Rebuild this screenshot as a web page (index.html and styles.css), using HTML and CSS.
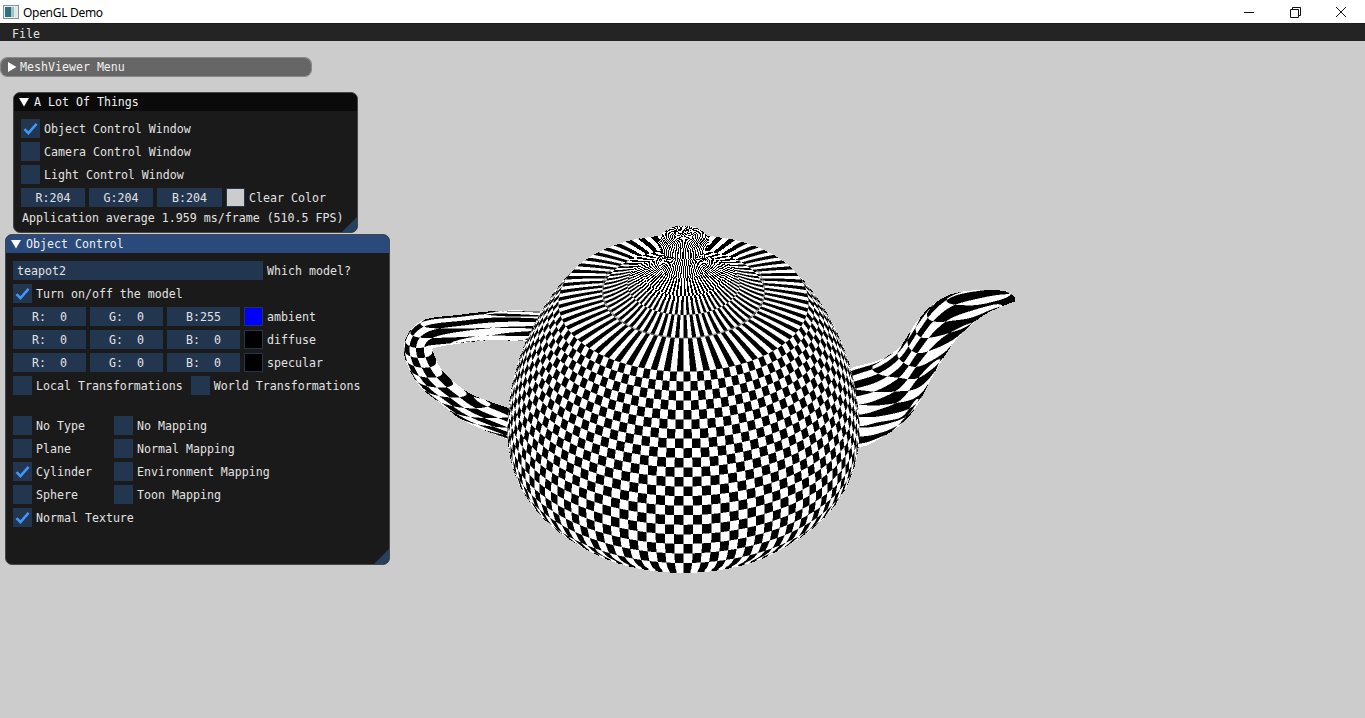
FILE: index.html
```html
<!DOCTYPE html>
<html lang="en">
<head>
<meta charset="utf-8">
<title>OpenGL Demo</title>
<link rel="stylesheet" href="styles.css">
</head>
<body>
<svg class="defs" width="0" height="0" aria-hidden="true">
  <symbol id="check" viewBox="0 0 19 19"><path d="M3.5 10.2 7.4 14.2 15.6 4.8" fill="none" stroke="#4296fa" stroke-width="2.6"/></symbol>
  <symbol id="down" viewBox="0 0 10 10"><path d="M0 1H10L5 9.5Z" fill="#fff"/></symbol>
  <symbol id="right" viewBox="0 0 10 10"><path d="M1 0V10L9.5 5Z" fill="#fff"/></symbol>
</svg>
<header class="titlebar">
  <svg class="appicon" width="16" height="14" viewBox="0 0 16 14">
    <rect x="0.5" y="0.5" width="15" height="13" fill="#e8eef0" stroke="#8a9296"/>
    <rect x="2" y="2" width="6" height="10" fill="#2f6f7f"/>
    <rect x="8" y="2" width="3" height="10" fill="#9fc4c8"/>
    <rect x="11" y="2" width="3" height="10" fill="#dfe8e4"/>
  </svg>
  <span class="apptitle">OpenGL Demo</span>
  <div class="winbtns">
    <svg class="winbtn" width="46" height="20" viewBox="0 0 46 20"><path d="M18 10.5H28" stroke="#111" fill="none"/></svg>
    <svg class="winbtn" width="46" height="20" viewBox="0 0 46 20"><path d="M18.5 7.5H26.5V15.5H18.5ZM20.5 7.5V5.5H28.5V13.5H26.5" stroke="#111" fill="none"/></svg>
    <svg class="winbtn" width="46" height="20" viewBox="0 0 46 20"><path d="M18 5 28 15M28 5 18 15" stroke="#111" fill="none"/></svg>
  </div>
</header>
<nav class="menubar"><span>File</span></nav>
<main class="viewport">
  <canvas id="teapot" class="teapot" width="620" height="360"></canvas>

  <section class="win win-menu">
    <div class="wintitle collapsed"><svg class="arrow" width="10" height="10"><use href="#right"/></svg><span>MeshViewer Menu</span></div>
  </section>

  <section class="win win-things">
    <div class="wintitle inactive"><svg class="arrow" width="10" height="10"><use href="#down"/></svg><span>A Lot Of Things</span></div>
    <div class="winbody">
      <label class="row"><i class="cb"><svg width="19" height="19"><use href="#check"/></svg></i><span>Object Control Window</span></label>
      <label class="row"><i class="cb"></i><span>Camera Control Window</span></label>
      <label class="row"><i class="cb"></i><span>Light Control Window</span></label>
      <div class="row colors short">
        <b class="field">R:204</b><b class="field">G:204</b><b class="field wide">B:204</b>
        <i class="swatch clear"></i><span class="swlabel">Clear Color</span>
      </div>
      <p class="stat">Application average 1.959 ms/frame (510.5 FPS)</p>
    </div>
    <i class="grip"></i>
  </section>

  <section class="win win-object">
    <div class="wintitle active"><svg class="arrow" width="10" height="10"><use href="#down"/></svg><span>Object Control</span></div>
    <div class="winbody">
      <div class="row"><b class="field input">teapot2</b><span class="swlabel">Which model?</span></div>
      <label class="row"><i class="cb"><svg width="19" height="19"><use href="#check"/></svg></i><span>Turn on/off the model</span></label>
      <div class="row colors">
        <b class="field">R:  0</b><b class="field">G:  0</b><b class="field">B:255</b>
        <i class="swatch blue"></i><span class="swlabel">ambient</span>
      </div>
      <div class="row colors">
        <b class="field">R:  0</b><b class="field">G:  0</b><b class="field">B:  0</b>
        <i class="swatch black"></i><span class="swlabel">diffuse</span>
      </div>
      <div class="row colors">
        <b class="field">R:  0</b><b class="field">G:  0</b><b class="field">B:  0</b>
        <i class="swatch black"></i><span class="swlabel">specular</span>
      </div>
      <div class="row transforms">
        <label class="row"><i class="cb"></i><span>Local Transformations</span></label>
        <label class="row"><i class="cb"></i><span>World Transformations</span></label>
      </div>
      <div class="options">
        <label class="row"><i class="cb"></i><span>No Type</span></label>
        <label class="row"><i class="cb"></i><span>No Mapping</span></label>
        <label class="row"><i class="cb"></i><span>Plane</span></label>
        <label class="row"><i class="cb"></i><span>Normal Mapping</span></label>
        <label class="row"><i class="cb"><svg width="19" height="19"><use href="#check"/></svg></i><span>Cylinder</span></label>
        <label class="row"><i class="cb"></i><span>Environment Mapping</span></label>
        <label class="row"><i class="cb"></i><span>Sphere</span></label>
        <label class="row"><i class="cb"></i><span>Toon Mapping</span></label>
        <label class="row"><i class="cb"><svg width="19" height="19"><use href="#check"/></svg></i><span>Normal Texture</span></label>
      </div>
    </div>
    <i class="grip"></i>
  </section>
</main>
<script src="teapot.js"></script>
</body>
</html>
```
FILE: styles.css
```css
* { box-sizing: border-box; }
html, body { margin: 0; height: 100%; overflow: hidden; }
body {
  display: flex;
  flex-direction: column;
  background: #cccccc;
  color: #e2e2e2;
  font: 11.62px/13px "DejaVu Sans Mono", monospace;
}
.defs { position: absolute; }

.titlebar {
  height: 23px;
  flex: none;
  display: flex;
  align-items: center;
  background: #fff;
  color: #000;
  padding-left: 3px;
  font: 12px "Noto Sans", sans-serif;
  letter-spacing: -0.3px;
}
.appicon { margin-right: 4px; }
.apptitle { padding-top: 1px; }
.winbtns { margin-left: auto; display: flex; margin-right: 1px; }
.winbtn { display: block; }

.menubar {
  height: 18px;
  flex: none;
  background: #242424;
  border-top: 1px solid #1c1c1c;
  padding: 4px 0 0 12px;
}

.viewport { position: relative; flex: 1; }
.teapot { position: absolute; left: 400px; top: 179px; }

.win {
  position: absolute;
  background: #1a1a1a;
  border: 1px solid #45454c;
  border-radius: 7px;
  overflow: hidden;
}
.win-menu { left: 0; top: 16px; width: 312px; height: 20px; background: #666; border-color: #8a8a8a; }
.win-things { left: 13px; top: 51px; width: 345px; height: 141px; }
.win-object { left: 5px; top: 193px; width: 385px; height: 331px; }

.wintitle {
  height: 18px;
  display: flex;
  align-items: center;
  color: #f0f0f0;
  padding-left: 5px;
  gap: 5px;
}
.wintitle > span { padding-top: 1px; }
.arrow { flex: none; }
.wintitle.collapsed { background: #666; padding-left: 6px; gap: 3px; }
.wintitle.inactive { background: #0a0a0a; }
.wintitle.active { background: #294a7a; }

.winbody { display: flex; flex-direction: column; gap: 4px; padding: 8px 7px; }

.row { display: flex; align-items: center; height: 19px; }
.row > span { margin-left: 4px; padding-top: 2px; white-space: pre; }

.cb {
  width: 19px;
  height: 19px;
  flex: none;
  display: block;
  background: #233650;
}
.cb svg { display: block; }

.colors { gap: 4px; }
.field {
  width: 73px;
  height: 19px;
  flex: none;
  background: #233650;
  font-weight: normal;
  text-align: center;
  line-height: 20px;
  white-space: pre;
}
.short .field { width: 64px; }
.short .field.wide { width: 65px; }
.field.input { width: 250px; text-align: left; padding-left: 4px; }
.swatch { width: 19px; height: 19px; flex: none; border: 1px solid #233650; display: block; }
.clear { background: #cccccc; }
.blue { background: #0000ff; }
.black { background: #000; }
.colors > .swlabel { margin-left: 0; }

.transforms > .row + .row { margin-left: 8px; }
.transforms { margin-bottom: 17px; }

.options { display: grid; grid-template-columns: 101px auto; row-gap: 4px; justify-content: start; }
.options .row:last-child { grid-column: 1 / span 2; }

.stat { margin: 0; height: 13px; padding: 1px 0 0 1px; white-space: pre; }

.grip {
  position: absolute;
  right: 0;
  bottom: 0;
  width: 15px;
  height: 15px;
  background: #26405f;
  clip-path: polygon(100% 0, 100% 100%, 0 100%);
}
```
FILE: teapot.js
```js
(function () {
  var W = 620, H = 360, X0 = 400, Y0 = 220, SS = 2;
  var CX = 683.5, BASE = 500, NC = 118, ROW = 9.5, SE = 0.55, CE = 0.835;
  var RIM_H = 197, RIM_V = 21;
  var w = W * SS, h = H * SS;
  var col = new Uint8Array(w * h);
  var zb = new Float32Array(w * h).fill(-1e9);

  function tri(a, b, c) {
    var minx = Math.max(0, Math.floor(Math.min(a.x, b.x, c.x)));
    var maxx = Math.min(w - 1, Math.ceil(Math.max(a.x, b.x, c.x)));
    var miny = Math.max(0, Math.floor(Math.min(a.y, b.y, c.y)));
    var maxy = Math.min(h - 1, Math.ceil(Math.max(a.y, b.y, c.y)));
    var d = (b.x - a.x) * (c.y - a.y) - (b.y - a.y) * (c.x - a.x);
    if (Math.abs(d) < 1e-6) return;
    for (var y = miny; y <= maxy; y++) {
      for (var x = minx; x <= maxx; x++) {
        var px = x + 0.5, py = y + 0.5;
        var l1 = ((b.x - px) * (c.y - py) - (b.y - py) * (c.x - px)) / d;
        var l2 = ((c.x - px) * (a.y - py) - (c.y - py) * (a.x - px)) / d;
        var l3 = 1 - l1 - l2;
        if (l1 < 0 || l2 < 0 || l3 < 0) continue;
        var z = l1 * a.z + l2 * b.z + l3 * c.z;
        var i = y * w + x;
        if (z <= zb[i]) continue;
        zb[i] = z;
        var u = l1 * a.u + l2 * b.u + l3 * c.u;
        var v = l1 * a.v + l2 * b.v + l3 * c.v;
        col[i] = ((Math.floor(u) + Math.floor(v)) & 1) ? 2 : 1;
      }
    }
  }

  function world(X, Hh, Z, phi, v) {
    return {
      x: (CX + X - X0) * SS,
      y: (BASE - Hh + Z * SE - Y0) * SS,
      z: Z * CE + Hh * SE,
      u: phi * NC / (2 * Math.PI),
      v: v
    };
  }

  function catmull(pts, steps) {
    var out = [];
    for (var i = 0; i < pts.length - 1; i++) {
      var p0 = pts[Math.max(0, i - 1)], p1 = pts[i], p2 = pts[i + 1], p3 = pts[Math.min(pts.length - 1, i + 2)];
      for (var s = 0; s < steps; s++) {
        var t = s / steps, t2 = t * t, t3 = t2 * t;
        out.push([
          0.5 * (2 * p1[0] + (p2[0] - p0[0]) * t + (2 * p0[0] - 5 * p1[0] + 4 * p2[0] - p3[0]) * t2 + (3 * p1[0] - p0[0] - 3 * p2[0] + p3[0]) * t3),
          0.5 * (2 * p1[1] + (p2[1] - p0[1]) * t + (2 * p0[1] - 5 * p1[1] + 4 * p2[1] - p3[1]) * t2 + (3 * p1[1] - p0[1] - 3 * p2[1] + p3[1]) * t3)
        ]);
      }
    }
    out.push(pts[pts.length - 1]);
    return out;
  }

  // a tube given by its two screen edges; a0 = spread of the depth across the tube
  function tube(outer, inner, a0, b0, rowH) {
    var a = catmull(outer, 14), b = catmull(inner, 14), N = 24, grid = [];
    for (var i = 0; i < a.length; i++) {
      var r = [];
      var hw = Math.hypot(a[i][0] - b[i][0], a[i][1] - b[i][1]) / 2;
      for (var j = 0; j <= N; j++) {
        var t = j / N;
        var sx = a[i][0] + (b[i][0] - a[i][0]) * t, sy = a[i][1] + (b[i][1] - a[i][1]) * t;
        var bulge = hw * Math.sqrt(Math.max(0, 4 * t * (1 - t)));
        var X = sx - CX, Hh = BASE - sy + bulge * SE;
        var uZ = hw * (2 * t - 1) * a0 + bulge * b0;
        r.push({ x: (sx - X0) * SS, y: (sy - Y0) * SS, z: -1e6, u: Math.atan2(X, uZ) * NC / (2 * Math.PI), v: Hh / rowH });
      }
      grid.push(r);
    }
    mesh(grid);
  }

  function mesh(g) {
    for (var i = 0; i < g.length - 1; i++) {
      for (var j = 0; j < g[i].length - 1; j++) {
        tri(g[i][j], g[i + 1][j], g[i + 1][j + 1]);
        tri(g[i][j], g[i + 1][j + 1], g[i][j + 1]);
      }
    }
  }

  // handle: outer edge, inner edge
  tube(
    [[540, 311], [500, 311], [460, 315], [420, 322], [404, 348], [417, 382], [443, 405], [467, 422], [515, 442]],
    [[540, 342], [500, 340], [477, 341], [437, 347], [433, 352], [443, 372], [467, 392], [490, 402], [520, 412]],
    1.8, 0.8, 10
  );
  // spout: upper edge, lower edge
  tube(
    [[835, 374], [852, 368], [880, 360], [900, 347], [917, 322], [933, 305], [953, 294], [983, 290], [1007, 292], [1015, 298]],
    [[835, 452], [860, 447], [873, 442], [900, 425], [917, 405], [933, 375], [947, 352], [960, 335], [985, 314], [1015, 301]],
    1.0, 0.4, 13
  );

  // body of revolution: profile of [radius, height] bezier pieces
  var segs = [
    [[132, 0], [132, 5], [176, 20], [176, 70]],
    [[176, 70], [176, 120], [150, 170], [125, 197]],
    [[125, 197], [118, 199], [100, 203], [81, 206.5]],
    [[81, 206.5], [60, 212], [45, 222], [28, 232]],
    [[28, 232], [16, 240], [16, 246], [24, 254]],
    [[24, 254], [30, 262], [14, 268], [0, 268]]
  ];
  var prof = [];
  segs.forEach(function (s) {
    for (var k = 0; k < 24; k++) {
      var t = k / 24, m = 1 - t;
      prof.push([
        m * m * m * s[0][0] + 3 * m * m * t * s[1][0] + 3 * m * t * t * s[2][0] + t * t * t * s[3][0],
        m * m * m * s[0][1] + 3 * m * m * t * s[1][1] + 3 * m * t * t * s[2][1] + t * t * t * s[3][1]
      ]);
    }
  });
  prof.push([0, 268]);

  // rows stay evenly spaced down the front of the body; the lid keeps long radial stripes
  var bottomY = BASE + 132 * SE, rimY = BASE - RIM_H + 125 * SE;
  function rowOf(p, idx) {
    if (idx < 48) {
      var fy = BASE - p[1] + p[0] * SE;
      return (bottomY - fy) / (bottomY - rimY) * RIM_V;
    }
    return RIM_V + (p[1] - RIM_H) / ROW;
  }

  var grid = [], NP = 236;
  for (var i = 0; i <= NP; i++) {
    var phi = -Math.PI + 2 * Math.PI * i / NP, r = [];
    for (var j = 0; j < prof.length; j++) {
      r.push(world(prof[j][0] * Math.sin(phi), prof[j][1], prof[j][0] * Math.cos(phi), phi, rowOf(prof[j], j)));
    }
    grid.push(r);
  }
  mesh(grid);

  var cv = document.getElementById('teapot'), ctx = cv.getContext('2d');
  var im = ctx.createImageData(W, H), d = im.data;
  for (var y = 0; y < H; y++) {
    for (var x = 0; x < W; x++) {
      var sum = 0, cov = 0;
      var ex = (x + X0 - 683) / 55, ey = (y + Y0 - 262) / 40;
      var crisp = ex * ex + ey * ey < 1;
      for (var sy = 0; sy < SS; sy++) {
        for (var sx = 0; sx < SS; sx++) {
          if (crisp && (sx || sy)) continue;
          var c = col[(y * SS + sy) * w + x * SS + sx];
          if (c) { cov++; if (c === 2) sum += 255; }
        }
      }
      if (!cov) continue;
      var o = (y * W + x) * 4, vv = sum / cov;
      d[o] = d[o + 1] = d[o + 2] = vv;
      d[o + 3] = 255;
    }
  }
  ctx.putImageData(im, 0, 0);

  // thin grey seam where the lid meets its raised centre
  ctx.strokeStyle = 'rgba(130,130,130,0.6)';
  ctx.lineWidth = 1.5;
  ctx.beginPath();
  ctx.ellipse(CX - X0, 290 - Y0, 81, 48, 0, -25 * Math.PI / 180, 205 * Math.PI / 180);
  ctx.stroke();
})();
```
